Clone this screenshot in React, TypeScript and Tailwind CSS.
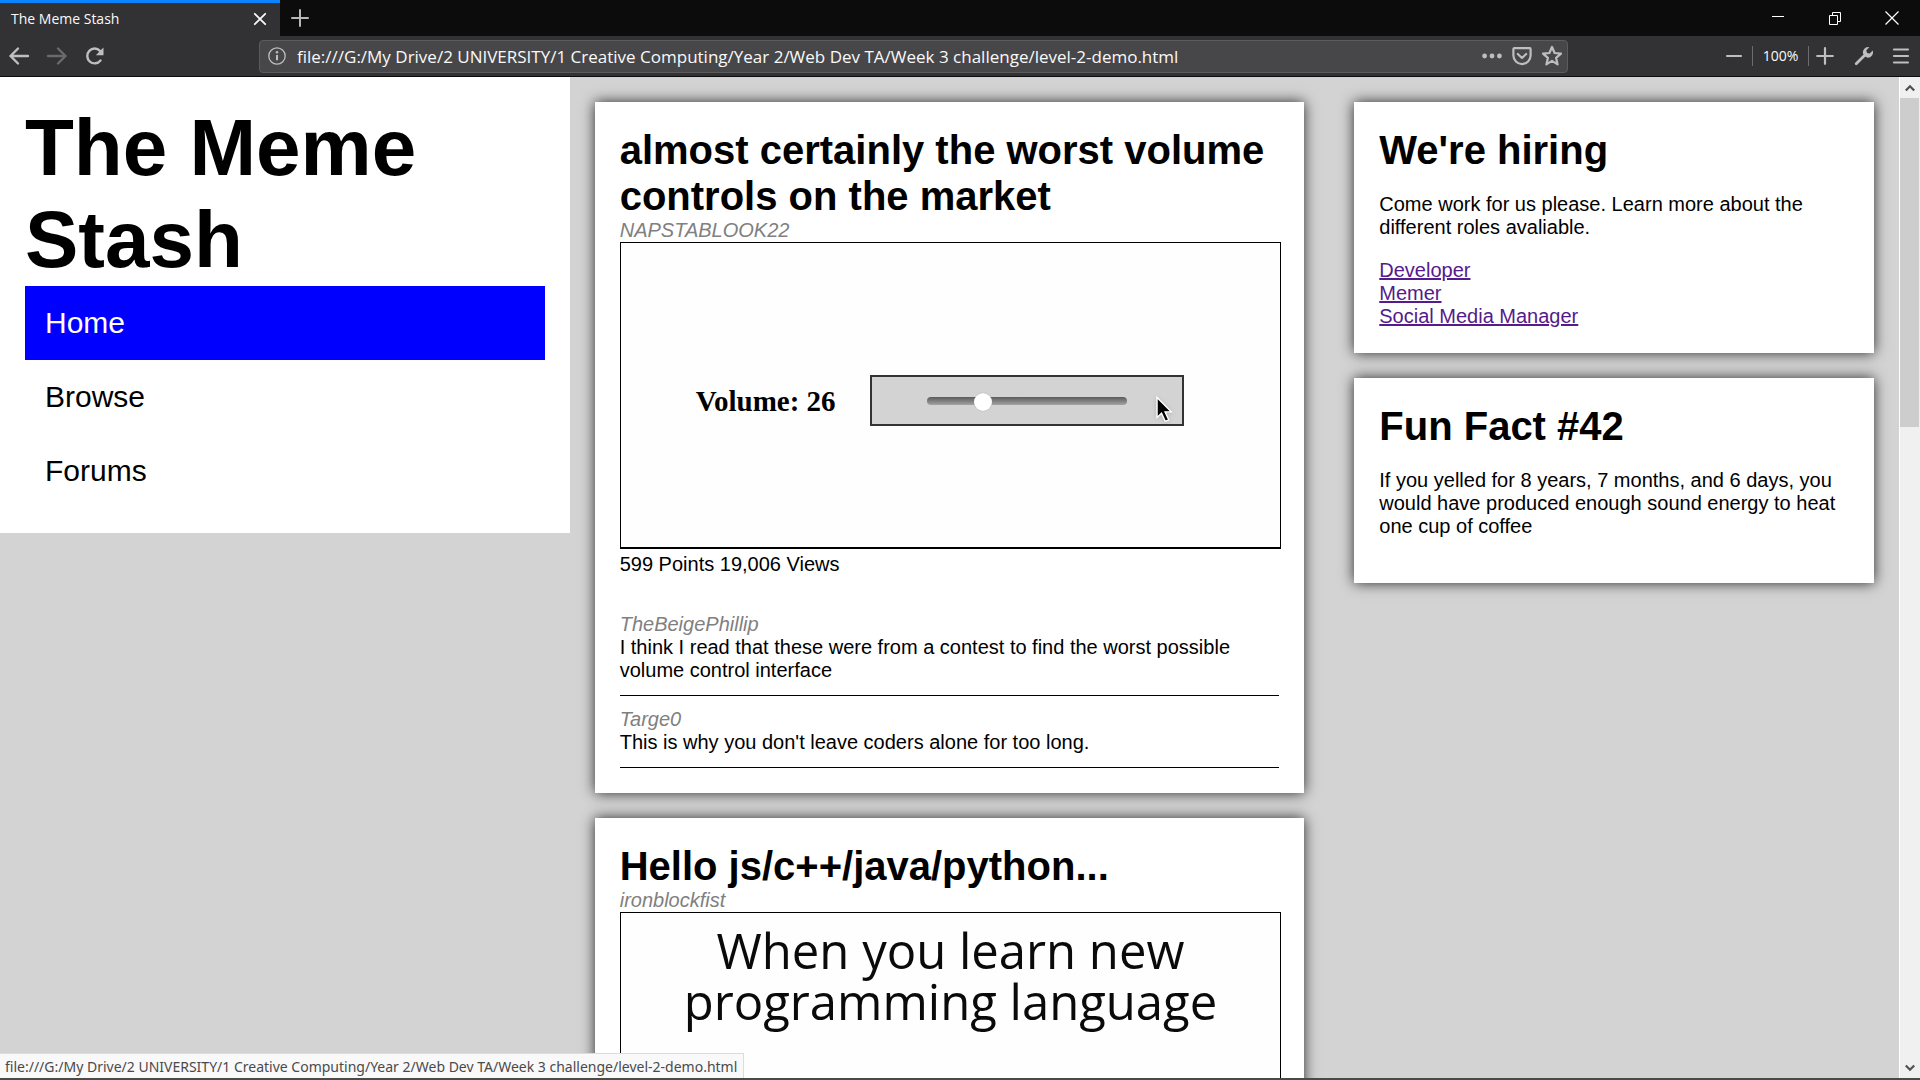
import React from "react";

const PAGE_URL =
  "file:///G:/My Drive/2 UNIVERSITY/1 Creative Computing/Year 2/Web Dev TA/Week 3 challenge/level-2-demo.html";

function TabStrip() {
  return (
    <div className="flex h-9 shrink-0 items-stretch bg-[#0c0c0d]">
      <div className="flex w-[280px] items-center justify-between border-t-3 border-[#0a84ff] bg-[#323234] pr-[13px] pb-0.5 pl-[11px]">
        <span className="text-[14px] leading-5 text-[#f9f9fa]">The Meme Stash</span>
        <button aria-label="Close tab" className="text-[#f9f9fa]">
          <svg width="14" height="14" viewBox="0 0 14 14" fill="none" stroke="currentColor" strokeWidth="1.8" strokeLinecap="round">
            <path d="M1.8 1.8l10.4 10.4M12.2 1.8L1.8 12.2" />
          </svg>
        </button>
      </div>
      <button aria-label="New tab" className="ml-[11px] text-[#b7b7b8]">
        <svg width="18" height="18" viewBox="0 0 18 18" fill="none" stroke="currentColor" strokeWidth="2" strokeLinecap="round">
          <path d="M9 1v16M1 9h16" />
        </svg>
      </button>
      <div className="ml-auto flex items-center text-white">
        <button aria-label="Minimize" className="flex w-14 justify-center">
          <svg width="14" height="14" viewBox="0 0 14 14" stroke="currentColor">
            <path d="M1 5.5h12" />
          </svg>
        </button>
        <button aria-label="Restore" className="flex w-[58px] justify-center">
          <svg width="14" height="14" viewBox="0 0 14 14" fill="none" stroke="currentColor">
            <path d="M1.5 4.5h8v9h-8zM4.5 4.500v-3h8v9h-3" />
          </svg>
        </button>
        <button aria-label="Close" className="flex w-14 justify-center">
          <svg width="14" height="14" viewBox="0 0 14 14" stroke="currentColor" strokeWidth="1.200">
            <path d="M.5 .5l13 13M13.500 .5l-13 13" />
          </svg>
        </button>
      </div>
    </div>
  );
}

function Toolbar() {
  return (
    <div className="flex h-[41px] shrink-0 items-center border-b border-[#0c0c0d] bg-[#323234] pr-[10px] pl-2 text-[#bebebf]">
      <button aria-label="Back">
        <svg width="22" height="20" viewBox="0 0 22 20" fill="none" stroke="currentColor" strokeWidth="2.400" strokeLinecap="round" strokeLinejoin="round">
          <path d="M20 10H2.500M10 2.500L2.500 10l7.500 7.500" />
        </svg>
      </button>
      <button aria-label="Forward" className="ml-4 text-[#6a6a6c]">
        <svg width="22" height="20" viewBox="0 0 22 20" fill="none" stroke="currentColor" strokeWidth="2.400" strokeLinecap="round" strokeLinejoin="round">
          <path d="M2 10h17.500M12 2.500l7.500 7.500-7.500 7.500" />
        </svg>
      </button>
      <button aria-label="Reload" className="ml-4">
        <svg width="22" height="20" viewBox="0 0 22 20" fill="none">
          <path d="M16.500 14.500A7.400 7.400 0 1 1 16 4.800" stroke="currentColor" strokeWidth="2.400" strokeLinecap="round" />
          <path d="M19.500 1.500v7.300a.5 .5 0 0 1-.5 .5h-7.200z" fill="currentColor" />
        </svg>
      </button>
      <div className="ml-[153px] flex h-[33px] min-w-0 flex-1 items-center rounded-sm border border-[#5c5c5e] bg-[#474749] pr-1 pl-2">
        <svg width="18" height="18" viewBox="0 0 18 18" className="shrink-0" aria-hidden="true">
          <circle cx="9" cy="9" r="8.200" fill="none" stroke="currentColor" strokeWidth="1.300" />
          <path d="M9 8v5.200" stroke="currentColor" strokeWidth="2" />
          <circle cx="9" cy="5.200" r="1.200" fill="currentColor" />
        </svg>
        <input
          aria-label="Address"
          defaultValue={PAGE_URL}
          className="ml-[11px] min-w-0 flex-1 bg-transparent pt-0.5 text-[17px] leading-6 text-[#f9f9fa] outline-none"
        />
        <button aria-label="Page actions">
          <svg width="20" height="20" viewBox="0 0 20 20" fill="currentColor">
            <circle cx="2.600" cy="10" r="2.400" />
            <circle cx="10" cy="10" r="2.400" />
            <circle cx="17.400" cy="10" r="2.400" />
          </svg>
        </button>
        <button aria-label="Save to Pocket" className="ml-[10px]">
          <svg width="20" height="20" viewBox="0 0 20 20" fill="none" stroke="currentColor" strokeWidth="2.200" strokeLinecap="round" strokeLinejoin="round">
            <path d="M2.200 2.200h15.600a.8 .8 0 0 1 .8 .8v6.500a8.600 8.600 0 0 1-17.200 0V3a.8 .8 0 0 1 .8-.8z" />
            <path d="M5.800 8l4.200 4 4.200-4" />
          </svg>
        </button>
        <button aria-label="Bookmark this page" className="ml-[9px]">
          <svg width="22" height="22" viewBox="0 0 22 22" fill="none" stroke="currentColor" strokeWidth="2.200" strokeLinejoin="round">
            <path d="M11 2l2.600 6 6.400.6-4.900 4.300 1.500 6.500L11 15.900l-5.600 3.500 1.500-6.500L2 8.600 8.400 8z" />
          </svg>
        </button>
      </div>
      <button aria-label="Zoom out" className="ml-[157px]">
        <svg width="18" height="18" viewBox="0 0 18 18" stroke="currentColor" strokeWidth="2.200" strokeLinecap="round">
          <path d="M2 9h14" />
        </svg>
      </button>
      <span className="ml-[9px] h-5 w-px bg-[#6c6c6e]" />
      <button className="w-[55px] text-center text-[14px] leading-5 text-[#f9f9fa]">100%</button>
      <span className="h-5 w-px bg-[#6c6c6e]" />
      <button aria-label="Zoom in" className="ml-[7px]">
        <svg width="18" height="18" viewBox="0 0 18 18" stroke="currentColor" strokeWidth="2.200" strokeLinecap="round">
          <path d="M9 1.200v15.600M1.200 9h15.600" />
        </svg>
      </button>
      <button aria-label="Developer tools" className="ml-5">
        <svg width="20" height="20" viewBox="0 0 20 20" fill="none">
          <path d="M2.200 17.800L11 9" stroke="currentColor" strokeWidth="2.800" strokeLinecap="round" />
          <path
            d="M18.700 4.600l-3 3-2.700-.7-.7-2.700 3-3a5.300 5.300 0 0 0-6.300 6.300l1.800 2.800 2.800 1.400a5.300 5.300 0 0 0 5.100-7.100z"
            fill="currentColor"
          />
        </svg>
      </button>
      <button aria-label="Menu" className="ml-[18px]">
        <svg width="18" height="18" viewBox="0 0 18 18" stroke="currentColor" strokeWidth="2.200" strokeLinecap="round">
          <path d="M2 2.500h14M2 9h14M2 15.500h14" />
        </svg>
      </button>
    </div>
  );
}

function Sidebar() {
  const links = ["Home", "Browse", "Forums"];
  return (
    <aside className="w-[30%] shrink-0 self-start bg-white p-[25px]">
      <h1 className="text-[80px] leading-[92px] font-bold">The Meme Stash</h1>
      <nav>
        {links.map((l, i) => (
          <a
            key={l}
            href="#"
            className={
              i === 0
                ? "block bg-[#0000ff] p-5 text-[30px] leading-[34px] text-white"
                : "block p-5 text-[30px] leading-[34px] text-black"
            }
          >
            {l}
          </a>
        ))}
      </nav>
    </aside>
  );
}

function Card({ children }: { children: React.ReactNode }) {
  return <section className="bg-white p-[25px] shadow-[0_0_13px_rgba(0,0,0,0.8)]">{children}</section>;
}

function Title({ children }: { children: React.ReactNode }) {
  return <h2 className="text-[40px] leading-[46px] font-bold">{children}</h2>;
}

function Author({ children }: { children: React.ReactNode }) {
  return <p className="text-[#808080] italic">{children}</p>;
}

function Comment({ author, text }: { author: string; text: string }) {
  return (
    <li className="border-b border-black pt-3 pb-[13px]">
      <Author>{author}</Author>
      <p>{text}</p>
    </li>
  );
}

function VolumePicture() {
  return (
    <div className="-mr-0.5 flex h-[307px] items-center border border-b-2 border-black bg-[#fefefe] pt-[11px] pl-[75px]">
      <label htmlFor="volume" className="w-[174px] font-['Liberation_Serif',serif] text-[29px] leading-8 font-bold">
        Volume: 26
      </label>
      <div className="relative flex h-[51px] w-[314px] items-center justify-center border-2 border-[#333] bg-[#d3d3d3]">
        <input
          id="volume"
          type="range"
          min="0"
          max="100"
          defaultValue="26"
          className="h-5 w-[200px] appearance-none bg-transparent [&::-webkit-slider-runnable-track]:h-2 [&::-webkit-slider-runnable-track]:rounded-sm [&::-webkit-slider-runnable-track]:bg-linear-to-b [&::-webkit-slider-runnable-track]:from-[#5c5c5c] [&::-webkit-slider-runnable-track]:to-[#a4a4a4] [&::-webkit-slider-thumb]:-mt-[4px] [&::-webkit-slider-thumb]:size-[18px] [&::-webkit-slider-thumb]:appearance-none [&::-webkit-slider-thumb]:rounded-full [&::-webkit-slider-thumb]:bg-white [&::-webkit-slider-thumb]:shadow-[0_0_1px_#888]"
        />
        <svg width="19" height="28" viewBox="0 0 20 30" className="absolute right-2 bottom-0 drop-shadow-sm" aria-hidden="true">
          <path d="M2 1.500v21.500l4.800-4.600 4 8.800 3.700-1.700-3.900-8.500h6.600z" fill="#000" stroke="#fff" strokeWidth="1.500" />
        </svg>
      </div>
    </div>
  );
}

function Feed() {
  return (
    <main className="flex w-[40%] shrink-0 flex-col gap-[25px] p-[25px]">
      <Card>
        <Title>almost certainly the worst volume controls on the market</Title>
        <Author>NAPSTABLOOK22</Author>
        <VolumePicture />
        <p className="mt-1">599 Points 19,006 Views</p>
        <ul className="mt-[25px]">
          <Comment
            author="TheBeigePhillip"
            text="I think I read that these were from a contest to find the worst possible volume control interface"
          />
          <Comment author="Targe0" text="This is why you don't leave coders alone for too long." />
        </ul>
      </Card>
      <Card>
        <Title>Hello js/c++/java/python...</Title>
        <Author>ironblockfist</Author>
        <p className="-mr-0.5 h-[400px] border border-black bg-[#fefefe] pt-3 text-center font-['Open_Sans',sans-serif] text-[49px] leading-[51px] text-[#0a0a0a]">
          When you learn new
          <br />
          programming language
        </p>
      </Card>
    </main>
  );
}

function Extras() {
  const roles = ["Developer", "Memer", "Social Media Manager"];
  return (
    <aside className="flex min-w-0 flex-1 flex-col gap-[25px] p-[25px]">
      <Card>
        <Title>We're hiring</Title>
        <p className="my-5">Come work for us please. Learn more about the different roles avaliable.</p>
        <ul>
          {roles.map((r) => (
            <li key={r}>
              <a href="#" className="text-[#551a8b] underline">
                {r}
              </a>
            </li>
          ))}
        </ul>
      </Card>
      <Card>
        <Title>Fun Fact #42</Title>
        <p className="my-5">
          If you yelled for 8 years, 7 months, and 6 days, you would have produced enough sound energy to heat one cup of
          coffee
        </p>
      </Card>
    </aside>
  );
}

function Scrollbar() {
  return (
    <div className="flex w-[21px] shrink-0 flex-col border-l border-white bg-[#f0f0f0] pr-px text-[#505050]">
      <button aria-label="Scroll up" className="flex h-[21px] shrink-0 items-center justify-center">
        <svg width="10" height="8" viewBox="0 0 10 8" fill="none" stroke="currentColor" strokeWidth="2.200">
          <path d="M.8 6.500L5 2.200l4.200 4.300" />
        </svg>
      </button>
      <div className="min-h-0 flex-1">
        <div className="h-[34.3%] bg-[#cdcdcd]" />
      </div>
      <button aria-label="Scroll down" className="flex h-[21px] shrink-0 items-center justify-center">
        <svg width="10" height="8" viewBox="0 0 10 8" fill="none" stroke="currentColor" strokeWidth="2.200">
          <path d="M.8 1.500L5 5.800l4.200-4.300" />
        </svg>
      </button>
    </div>
  );
}

export default function App() {
  return (
    <div className="flex h-screen flex-col overflow-hidden border-b-2 border-[#4a4a4a] font-['Open_Sans',sans-serif]">
      <TabStrip />
      <Toolbar />
      <div className="relative flex min-h-0 flex-1">
        <div className="flex min-w-0 flex-1 items-start overflow-hidden bg-[#d3d3d3] font-['Liberation_Sans',Arial,sans-serif] text-[20px] leading-[23px] text-black">
          <Sidebar />
          <Feed />
          <Extras />
        </div>
        <Scrollbar />
        <div className="absolute bottom-0 left-0 border-t border-r border-[#dcdcdc] bg-[#f9f9fa] pt-0.5 pr-[6px] pl-[5px] font-['Noto_Sans',sans-serif] text-[14px] leading-[22px] text-[#4a4a4a]">
          {PAGE_URL}
        </div>
      </div>
    </div>
  );
}
